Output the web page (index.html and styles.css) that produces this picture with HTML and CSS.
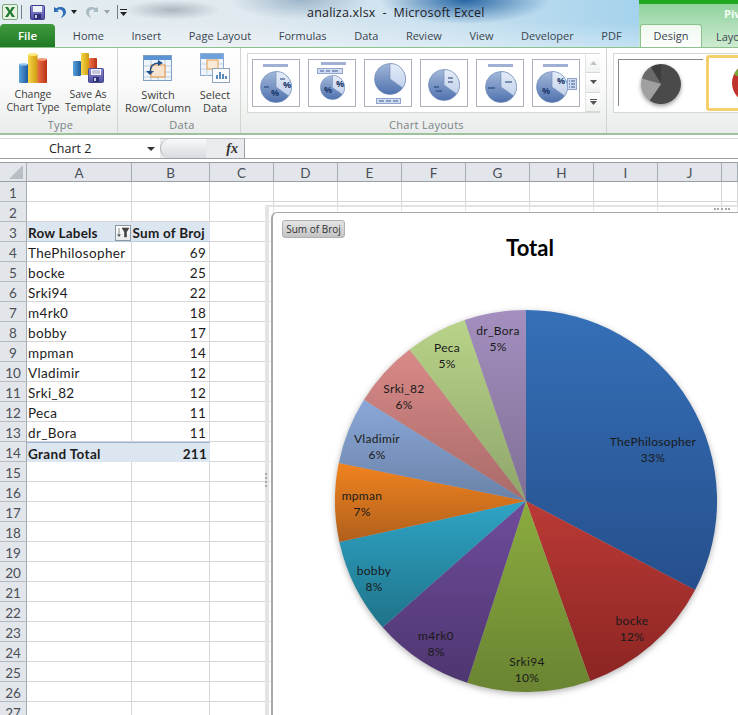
FILE: index.html
```html
<!DOCTYPE html>
<html lang="en">
<head>
<meta charset="utf-8">
<title>analiza.xlsx - Microsoft Excel</title>
<link rel="stylesheet" href="styles.css">
</head>
<body>
<svg class="defs" width="0" height="0">
  <defs>
    <linearGradient id="gBlue" x1="0" y1="0" x2="0" y2="1"><stop offset="0" stop-color="#3570b8"/><stop offset="1" stop-color="#264f8c"/></linearGradient>
    <linearGradient id="gRed" x1="0" y1="0" x2="0" y2="1"><stop offset="0" stop-color="#bb3a36"/><stop offset="1" stop-color="#8b2523"/></linearGradient>
    <linearGradient id="gGreen" x1="0" y1="0" x2="0" y2="1"><stop offset="0" stop-color="#8bac3f"/><stop offset="1" stop-color="#6a8432"/></linearGradient>
    <linearGradient id="gPurple" x1="0" y1="0" x2="0" y2="1"><stop offset="0" stop-color="#6f4c9c"/><stop offset="1" stop-color="#4e3670"/></linearGradient>
    <linearGradient id="gTeal" x1="0" y1="0" x2="0" y2="1"><stop offset="0" stop-color="#2fa4c6"/><stop offset="1" stop-color="#1f7389"/></linearGradient>
    <linearGradient id="gOrange" x1="0" y1="0" x2="0" y2="1"><stop offset="0" stop-color="#f1831f"/><stop offset="1" stop-color="#b0601c"/></linearGradient>
    <linearGradient id="gLBlue" x1="0" y1="0" x2="0" y2="1"><stop offset="0" stop-color="#8aa8d8"/><stop offset="1" stop-color="#6a82a8"/></linearGradient>
    <linearGradient id="gPink" x1="0" y1="0" x2="0" y2="1"><stop offset="0" stop-color="#d98a88"/><stop offset="1" stop-color="#a86a68"/></linearGradient>
    <linearGradient id="gLime" x1="0" y1="0" x2="0" y2="1"><stop offset="0" stop-color="#b9d389"/><stop offset="1" stop-color="#8ea56a"/></linearGradient>
    <linearGradient id="gLilac" x1="0" y1="0" x2="0" y2="1"><stop offset="0" stop-color="#a48fbf"/><stop offset="1" stop-color="#7f6f95"/></linearGradient>
    <linearGradient id="tPie" x1="0" y1="0" x2="0" y2="1"><stop offset="0" stop-color="#a3b8da"/><stop offset="1" stop-color="#4f72ae"/></linearGradient>
    <linearGradient id="tLight" x1="0" y1="0" x2="0" y2="1"><stop offset="0" stop-color="#e4ecf8"/><stop offset="1" stop-color="#c2d2ec"/></linearGradient>
    <linearGradient id="bBlue" x1="0" y1="0" x2="1" y2="0"><stop offset="0" stop-color="#5aa2dc"/><stop offset="1" stop-color="#1d5a9e"/></linearGradient>
    <linearGradient id="bYel" x1="0" y1="0" x2="1" y2="0"><stop offset="0" stop-color="#f6d848"/><stop offset="1" stop-color="#cf9a10"/></linearGradient>
    <linearGradient id="bRed" x1="0" y1="0" x2="1" y2="0"><stop offset="0" stop-color="#ef7448"/><stop offset="1" stop-color="#b93212"/></linearGradient>
    <linearGradient id="fl" x1="0" y1="0" x2="0" y2="1"><stop offset="0" stop-color="#8f8fd8"/><stop offset="1" stop-color="#4e4ea0"/></linearGradient>
    <symbol id="pie" viewBox="0 0 32 32">
      <circle cx="16" cy="16" r="15.5" fill="url(#tPie)" stroke="#6f88b4" stroke-width=".6"/>
      <path d="M16 16V.5A15.5 15.5 0 0 1 28.7 24.9Z" fill="url(#tLight)" stroke="#6f88b4" stroke-width=".6"/>
    </symbol>
  </defs>
</svg>

<header class="top">
  <div class="top-main">
    <div class="qat">
      <svg class="qat-app" width="16" height="16" viewBox="0 0 16 16"><rect x=".5" y=".5" width="15" height="15" rx="1.5" fill="#e8f2e2" stroke="#7da77d"/><path d="M3 3h3l2 3.400L10 3h3l-3.500 5 3.500 5h-3l-2-3.400L6 13H3l3.500-5z" fill="#1f7a33"/></svg>
      <span class="qat-sep"></span>
      <svg class="qat-save" width="15" height="15" viewBox="0 0 15 15"><rect x=".5" y=".5" width="14" height="14" rx="1" fill="url(#fl)" stroke="#3c3c8c"/><rect x="3" y="1" width="9" height="6" fill="#eef0fa"/><rect x="4" y="9" width="7" height="5" fill="#2e2e70"/><rect x="5" y="10" width="2" height="3" fill="#c8c8e8"/></svg>
      <svg class="qat-undo" width="14" height="14" viewBox="0 0 14 14"><path d="M1 2v5h5L4.200 5.200C6.500 3.800 10 4.800 10 8c0 2-1 3.500-2.500 5 3.500-1 5.500-3.400 5.500-6 0-4.500-5.500-6.500-9.800-3.800z" fill="#2f6db8"/></svg>
      <svg class="qat-arrow" width="6" height="4" viewBox="0 0 6 4"><path d="M0 0h6L3 4z" fill="#222"/></svg>
      <svg class="qat-redo" width="14" height="14" viewBox="0 0 14 14"><path d="M13 2v5H8l1.800-1.800C7.500 3.800 4 4.800 4 8c0 2 1 3.500 2.500 5C3 12 1 9.600 1 7c0-4.500 5.500-6.500 9.800-3.800z" fill="#a9bcc4"/></svg>
      <svg class="qat-arrow2" width="6" height="4" viewBox="0 0 6 4"><path d="M0 0h6L3 4z" fill="#9aa5aa"/></svg>
      <span class="qat-sep qat-sep2"></span>
      <svg class="qat-custom" width="7" height="7" viewBox="0 0 7 7"><path d="M0 0h7v1H0zM0 3h7L3.500 7z" fill="#222"/></svg>
      <span class="doc-title">analiza.xlsx  -  Microsoft Excel</span>
    </div>
    <nav class="tabs">
      <span class="tab-file">File</span>
      <span class="tab">Home</span>
      <span class="tab">Insert</span>
      <span class="tab">Page Layout</span>
      <span class="tab">Formulas</span>
      <span class="tab">Data</span>
      <span class="tab">Review</span>
      <span class="tab">View</span>
      <span class="tab">Developer</span>
      <span class="tab">PDF</span>
    </nav>
  </div>
  <div class="top-ctx">
    <div class="ctx-band"></div>
    <div class="ctx-title">PivotChart Tools</div>
    <div class="ctx-tabs">
      <span class="tab-design">Design</span>
      <span class="tab tab-layout">Layout</span>
    </div>
  </div>
</header>

<section class="ribbon">
  <div class="group group-type">
    <div class="group-body">
      <div class="rbtn rbtn-change">
        <svg width="29" height="30" viewBox="0 0 29 30"><rect x="0" y="11" width="9" height="19" rx="1" fill="url(#bBlue)"/><rect x="18" y="6" width="10" height="24" rx="1" fill="url(#bRed)"/><rect x="9" y="1" width="9.500" height="29" rx="1" fill="url(#bYel)"/><ellipse cx="13.700" cy="1.500" rx="4.500" ry="1.500" fill="#fbe97a"/><ellipse cx="23" cy="6.500" rx="4.500" ry="1.400" fill="#f59a72"/><ellipse cx="4.500" cy="11.500" rx="4.200" ry="1.300" fill="#8fc4ec"/></svg>
        <span>Change<br>Chart Type</span>
      </div>
      <div class="rbtn rbtn-save">
        <svg width="31" height="30" viewBox="0 0 31 30"><rect x="0" y="8" width="8" height="15" rx="1" fill="url(#bBlue)"/><rect x="16" y="5" width="8" height="17" rx="1" fill="url(#bRed)"/><rect x="8" y="0" width="8" height="22" rx="1" fill="url(#bYel)"/><rect x="15.500" y="15.500" width="15" height="14" rx="1" fill="url(#fl)" stroke="#4a4a8c"/><rect x="18" y="16" width="10" height="6" fill="#f2f2fa"/><path d="M19 18h8M19 20h8" stroke="#9a9ac8"/><rect x="20" y="24" width="6" height="5" fill="#2e2e70"/><rect x="21" y="25" width="2" height="3" fill="#d0d0e8"/></svg>
        <span>Save As<br>Template</span>
      </div>
    </div>
    <div class="group-label">Type</div>
  </div>
  <div class="group group-data">
    <div class="group-body">
      <div class="rbtn rbtn-switch">
        <svg width="30" height="30" viewBox="0 0 30 30"><rect x=".5" y="2.500" width="28" height="25" fill="#f0f5fb" stroke="#7d9fc8"/><rect x="1" y="3" width="27" height="4" fill="#5b93d2"/><path d="M1 13h27M1 19h27M1 24h27M8 7v20M15 7v20M22 7v20" stroke="#b8cfe6"/><rect x="8" y="12" width="14" height="12" fill="#f5e4cf" stroke="#e88f38"/><path d="M7 20c0-6 3-10 9-10" fill="none" stroke="#20508c" stroke-width="1.500"/><path d="M15 7l5 3-5 3z" fill="#20508c"/><path d="M3 18l4 4 4-4z" fill="#20508c"/></svg>
        <span>Switch<br>Row/Column</span>
      </div>
      <div class="rbtn rbtn-select">
        <svg width="30" height="30" viewBox="0 0 30 30"><rect x=".5" y=".5" width="23" height="22" fill="#f0f5fb" stroke="#8facd0"/><rect x="1" y="1" width="22" height="5" fill="#6fa2da"/><path d="M1 11h22M1 16h22M7 6v17M15 6v17" stroke="#c3d5e8"/><rect x="7" y="7" width="11" height="9" fill="#f9ead8" stroke="#e8a050"/><rect x="12.500" y="15.500" width="17" height="14" fill="#fafcff" stroke="#90a4bc"/><path d="M16 26v-4h2v4zM19 26v-7h2v7zM22 26v-5h2v5zM25 26v-3h2v3z" fill="#5c88b8"/></svg>
        <span>Select<br>Data</span>
      </div>
    </div>
    <div class="group-label">Data</div>
  </div>
  <div class="group group-layouts">
    <div class="group-body">
      <div class="gallery gallery-layouts">
        <div class="thumb"><svg width="46" height="46" viewBox="0 0 46 46"><rect x="10" y="4" width="25" height="3" fill="#9fb0d4"/><use href="#pie" x="7" y="11" width="32" height="32"/><path d="M27 19h5M11 27h5" stroke="#1c3a6e"/><text class="pct" x="30" y="28">%</text><text class="pct" x="18" y="36">%</text></svg></div>
        <div class="thumb"><svg width="46" height="46" viewBox="0 0 46 46"><rect x="12" y="2" width="25" height="3" fill="#9fb0d4"/><rect x="8.500" y="8.500" width="25" height="5" fill="#cfdcf2" stroke="#8fa5cc"/><path d="M11 11h4M17 11h4M23 11h6" stroke="#3f5a90"/><use href="#pie" x="11" y="15" width="25" height="25"/><text class="pct" x="27" y="27">%</text><text class="pct" x="15" y="33">%</text></svg></div>
        <div class="thumb"><svg width="46" height="46" viewBox="0 0 46 46"><use href="#pie" x="9" y="3" width="32" height="32"/><rect x="11.500" y="38.500" width="24" height="5" fill="#cfdcf2" stroke="#8fa5cc"/><path d="M14 41h5M21 41h5M28 41h5" stroke="#3f5a90"/></svg></div>
        <div class="thumb"><svg width="46" height="46" viewBox="0 0 46 46"><use href="#pie" x="7" y="9" width="32" height="32"/><path d="M27 18h5M27 22h5M13 27h5M15 31h6" stroke="#1c3a6e"/></svg></div>
        <div class="thumb"><svg width="46" height="46" viewBox="0 0 46 46"><rect x="11" y="4" width="25" height="3" fill="#9fb0d4"/><use href="#pie" x="8" y="11" width="32" height="32"/><path d="M28 22h7M11 28h7" stroke="#1c3a6e" stroke-width="1.200"/></svg></div>
        <div class="thumb"><svg width="46" height="46" viewBox="0 0 46 46"><rect x="10" y="4" width="25" height="3" fill="#9fb0d4"/><use href="#pie" x="3" y="11" width="32" height="32"/><text class="pct" x="24" y="24">%</text><text class="pct" x="9" y="34">%</text><rect x="34.500" y="18.500" width="9" height="11" fill="#cfdcf2" stroke="#8fa5cc"/><path d="M36 21h1M38 21h4M36 24h1M38 24h4M36 27h1M38 27h4" stroke="#3f5a90"/></svg></div>
        <div class="scroll">
          <span class="sbtn sbtn-up"><svg width="7" height="4" viewBox="0 0 7 4"><path d="M0 4h7L3.500 0z" fill="#bcc4c8"/></svg></span>
          <span class="sbtn"><svg width="7" height="4" viewBox="0 0 7 4"><path d="M0 0h7L3.500 4z" fill="#555"/></svg></span>
          <span class="sbtn"><svg width="7" height="6" viewBox="0 0 7 6"><path d="M0 0h7v1H0zM0 2h7L3.500 6z" fill="#555"/></svg></span>
        </div>
      </div>
    </div>
    <div class="group-label">Chart Layouts</div>
  </div>
  <div class="group group-styles">
    <div class="group-body">
      <div class="gallery gallery-styles">
        <div class="style-thumb">
          <svg class="style-pie" width="48" height="48" viewBox="0 0 48 48"><path d="M24 24V4A20 20 0 1 1 12.500 40.400Z" fill="#4a4a4a"/><path d="M24 24L12.500 40.400A20 20 0 0 1 4.800 18.500Z" fill="#a0a0a0"/><path d="M24 24L4.800 18.500A20 20 0 0 1 13.500 7Z" fill="#6a6a6a"/><path d="M24 24L13.500 7A20 20 0 0 1 24 4Z" fill="#3e3e3e"/></svg>
        </div>
        <div class="style-sel">
          <svg width="36" height="48" viewBox="0 0 36 48"><circle cx="24" cy="24" r="20" fill="#c0322e"/><path d="M24 24L5.900 15.500A20 20 0 0 1 17.200 5.200Z" fill="#7aa93a"/></svg>
        </div>
      </div>
    </div>
  </div>
</section>

<section class="formula">
  <div class="namebox"><span class="name-text">Chart 2</span><svg width="8" height="4" viewBox="0 0 8 4"><path d="M0 0h8L4 4z" fill="#333"/></svg></div>
  <div class="fx-wrap"><span class="fx-pill"></span><span class="fx">fx</span></div>
  <div class="fbar"></div>
</section>

<main class="sheet">
  <div class="row row-head">
    <div class="rh corner"><svg width="14" height="14" viewBox="0 0 14 14"><path d="M14 0v14H0z" fill="#b9bec5"/></svg></div>
    <div class="ch">A</div><div class="ch">B</div><div class="ch">C</div><div class="ch">D</div><div class="ch">E</div><div class="ch">F</div><div class="ch">G</div><div class="ch">H</div><div class="ch">I</div><div class="ch">J</div><div class="ch"></div>
  </div>
  <div class="row"><div class="rh">1</div><div class="c"></div><div class="c"></div><div class="c"></div><div class="c"></div><div class="c"></div><div class="c"></div><div class="c"></div><div class="c"></div><div class="c"></div><div class="c"></div><div class="c"></div></div>
  <div class="row"><div class="rh">2</div><div class="c"></div><div class="c"></div><div class="c"></div><div class="c"></div><div class="c"></div><div class="c"></div><div class="c"></div><div class="c"></div><div class="c"></div><div class="c"></div><div class="c"></div></div>
  <div class="row"><div class="rh">3</div><div class="c p-head p-a">Row Labels<span class="filter"><svg width="14" height="14" viewBox="0 0 14 14"><path d="M6 2h7L10.500 6v5h-2V6zM3 2v8M1.500 8.500L3 10.500 4.500 8.500" fill="#444" stroke="#444" stroke-width=".6"/></svg></span></div><div class="c p-head num">Sum of Broj</div><div class="c"></div></div>
  <div class="row"><div class="rh">4</div><div class="c a">ThePhilosopher</div><div class="c num">69</div><div class="c"></div></div>
  <div class="row"><div class="rh">5</div><div class="c a">bocke</div><div class="c num">25</div><div class="c"></div></div>
  <div class="row"><div class="rh">6</div><div class="c a">Srki94</div><div class="c num">22</div><div class="c"></div></div>
  <div class="row"><div class="rh">7</div><div class="c a">m4rk0</div><div class="c num">18</div><div class="c"></div></div>
  <div class="row"><div class="rh">8</div><div class="c a">bobby</div><div class="c num">17</div><div class="c"></div></div>
  <div class="row"><div class="rh">9</div><div class="c a">mpman</div><div class="c num">14</div><div class="c"></div></div>
  <div class="row"><div class="rh">10</div><div class="c a">Vladimir</div><div class="c num">12</div><div class="c"></div></div>
  <div class="row"><div class="rh">11</div><div class="c a">Srki_82</div><div class="c num">12</div><div class="c"></div></div>
  <div class="row"><div class="rh">12</div><div class="c a">Peca</div><div class="c num">11</div><div class="c"></div></div>
  <div class="row"><div class="rh">13</div><div class="c a">dr_Bora</div><div class="c num">11</div><div class="c"></div></div>
  <div class="row"><div class="rh">14</div><div class="c p-total a">Grand Total</div><div class="c p-total num">211</div><div class="c"></div></div>
  <div class="row"><div class="rh">15</div><div class="c"></div><div class="c"></div><div class="c"></div></div>
  <div class="row"><div class="rh">16</div><div class="c"></div><div class="c"></div><div class="c"></div></div>
  <div class="row"><div class="rh">17</div><div class="c"></div><div class="c"></div><div class="c"></div></div>
  <div class="row"><div class="rh">18</div><div class="c"></div><div class="c"></div><div class="c"></div></div>
  <div class="row"><div class="rh">19</div><div class="c"></div><div class="c"></div><div class="c"></div></div>
  <div class="row"><div class="rh">20</div><div class="c"></div><div class="c"></div><div class="c"></div></div>
  <div class="row"><div class="rh">21</div><div class="c"></div><div class="c"></div><div class="c"></div></div>
  <div class="row"><div class="rh">22</div><div class="c"></div><div class="c"></div><div class="c"></div></div>
  <div class="row"><div class="rh">23</div><div class="c"></div><div class="c"></div><div class="c"></div></div>
  <div class="row"><div class="rh">24</div><div class="c"></div><div class="c"></div><div class="c"></div></div>
  <div class="row"><div class="rh">25</div><div class="c"></div><div class="c"></div><div class="c"></div></div>
  <div class="row"><div class="rh">26</div><div class="c"></div><div class="c"></div><div class="c"></div></div>
  <div class="row"><div class="rh">27</div><div class="c"></div><div class="c"></div><div class="c"></div></div>

  <aside class="chart">
    <div class="chart-body">
      <div class="field-btn">Sum of Broj</div>
      <div class="chart-title">Total</div>
      <svg class="pie" width="418" height="415" viewBox="320 300 418 415">
        <g class="slices">
          <path d="M526 501V310A191 191 0 0 1 695.100 589.900Z" fill="url(#gBlue)"/>
          <path d="M526 501L695.100 589.900A191 191 0 0 1 590.100 680.900Z" fill="url(#gRed)"/>
          <path d="M526 501L590.100 680.900A191 191 0 0 1 467.200 682.700Z" fill="url(#gGreen)"/>
          <path d="M526 501L467.200 682.700A191 191 0 0 1 382.600 627.200Z" fill="url(#gPurple)"/>
          <path d="M526 501L382.600 627.200A191 191 0 0 1 339.400 541.900Z" fill="url(#gTeal)"/>
          <path d="M526 501L339.400 541.900A191 191 0 0 1 338.800 462.900Z" fill="url(#gOrange)"/>
          <path d="M526 501L338.800 462.900A191 191 0 0 1 364 399.800Z" fill="url(#gLBlue)"/>
          <path d="M526 501L364 399.800A191 191 0 0 1 409.600 349.600Z" fill="url(#gPink)"/>
          <path d="M526 501L409.600 349.600A191 191 0 0 1 464.600 320.100Z" fill="url(#gLime)"/>
          <path d="M526 501L464.600 320.100A191 191 0 0 1 526 310Z" fill="url(#gLilac)"/>
        </g>
        <g class="labels">
          <text x="653" y="446">ThePhilosopher</text><text x="653" y="462">33%</text>
          <text x="632" y="625">bocke</text><text x="632" y="641">12%</text>
          <text x="527" y="666">Srki94</text><text x="527" y="682">10%</text>
          <text x="436" y="640">m4rk0</text><text x="436" y="656">8%</text>
          <text x="374" y="575">bobby</text><text x="374" y="591">8%</text>
          <text x="362" y="500">mpman</text><text x="362" y="516">7%</text>
          <text x="377" y="443">Vladimir</text><text x="377" y="459">6%</text>
          <text x="404" y="393">Srki_82</text><text x="404" y="409">6%</text>
          <text x="447" y="352">Peca</text><text x="447" y="368">5%</text>
          <text x="498" y="335">dr_Bora</text><text x="498" y="351">5%</text>
        </g>
      </svg>
    </div>
  </aside>
</main>
</body>
</html>
```
FILE: styles.css
```css
* { box-sizing: border-box; }
html, body { margin: 0; height: 100%; }
body {
  width: 738px;
  height: 715px;
  overflow: hidden;
  background: #fff;
  font-family: "Open Sans", "Liberation Sans", sans-serif;
  font-size: 11px;
  color: #3c3c3c;
}
.defs { position: absolute; }

/* Title bar and tabs */
.top { display: flex; height: 48px; border-bottom: 1px solid #8cc08c; }
.top-main {
  width: 639px;
  display: flex;
  flex-direction: column;
  background:
    linear-gradient(rgba(255,255,255,0) 45%, rgba(255,255,255,.35) 100%),
    radial-gradient(ellipse 48px 10px at 172px 10px, rgba(120,130,140,.5), rgba(120,130,140,0)),
    radial-gradient(ellipse 85px 24px at 465px 0, rgba(30,95,160,.95), rgba(30,95,160,0)),
    radial-gradient(ellipse 70px 20px at 300px 0, rgba(70,110,150,.4), rgba(70,110,150,0)),
    linear-gradient(90deg, #e4edf1 0, #dfe9ef 40%, #c8e0ef 70%, #a4d2ec 100%);
}
.qat { height: 24px; display: flex; align-items: center; flex: none; }
.qat-app { margin-left: 2px; }
.qat-sep { width: 1px; height: 14px; background: #6e7f88; margin-left: 3px; }
.qat-save { margin-left: 8px; }
.qat-undo { margin-left: 8px; }
.qat-arrow { margin-left: 4px; }
.qat-redo { margin-left: 8px; }
.qat-arrow2 { margin-left: 5px; }
.qat-sep2 { margin-left: 7px; }
.qat-custom { margin-left: 2px; }
.doc-title {
  margin-left: 180px;
  font-size: 12.500px;
  letter-spacing: .2px;
  color: #1c2228;
  white-space: pre;
}
.tabs { height: 23px; display: flex; align-items: center; }
.tab-file {
  width: 55px;
  height: 23px;
  line-height: 23px;
  text-align: center;
  color: #fff;
  font-size: 11.500px;
  font-weight: 600;
  border-radius: 4px 4px 0 0;
  background: linear-gradient(#3f9a3f, #1f7a24);
  margin-right: 4px;
}
.tab { padding: 0 13.800px; color: #3c4650; white-space: nowrap; }

.top-ctx {
  width: 99px;
  display: flex;
  flex-direction: column;
  background: linear-gradient(#8bd09a, #cdebd0);
  overflow: hidden;
}
.ctx-band { height: 4px; background: #1fa81f; flex: none; }
.ctx-title {
  height: 20px;
  line-height: 20px;
  padding-left: 85px;
  color: #f4fff4;
  font-weight: 700;
  white-space: nowrap;
}
.ctx-tabs { height: 24px; display: flex; align-items: center; }
.tab-design {
  width: 62px;
  height: 24px;
  line-height: 22px;
  text-align: center;
  background: linear-gradient(#eef8ee, #fff);
  border: 1px solid #8cc08c;
  border-bottom: 0;
  border-radius: 3px 3px 0 0;
  color: #3c4650;
  flex: none;
  margin-left: 1px;
}
.tab-layout { padding-left: 14px; }

/* Ribbon */
.ribbon {
  display: flex;
  height: 87px;
  border-bottom: 2px solid #9cc29c;
  background: linear-gradient(#fff 0, #f8f9f8 50%, #e9ecea 100%);
  overflow: hidden;
}
.group { display: flex; flex-direction: column; flex: none; border-right: 1px solid #cfd6cf; }
.group-type { width: 118px; padding-left: 4px; font-size: 10.500px; }
.group-data { width: 123px; padding-left: 6px; }
.group-layouts { width: 366px; padding-left: 6px; }
.group-styles { flex: 1; min-width: 0; border-right: 0; padding-left: 6px; }
.group-body { height: 70px; display: flex; flex: none; }
.group-label { text-align: center; height: 15px; line-height: 13px; font-size: 11px; color: #7a8288; letter-spacing: .3px; }
.rbtn {
  display: flex;
  flex-direction: column;
  align-items: center;
  text-align: center;
  flex: none;
  padding-top: 5px;
  line-height: 13px;
  color: #3c3c3c;
  white-space: nowrap;
}
.rbtn svg { margin-bottom: 5px; }
.rbtn-change { width: 58px; }
.rbtn-save { width: 52px; }
.rbtn-switch { width: 68px; }
.rbtn-select { width: 46px; }

.gallery {
  height: 60px;
  margin-top: 5px;
  display: flex;
  background: #fff;
  border: 1px solid #d4d9d4;
  flex: none;
}
.gallery-layouts { width: 353px; padding: 5px 0 0 4px; gap: 8px; }
.gallery-styles { width: 140px; padding: 1px 0 0 4px; gap: 3px; }
.thumb { width: 48px; height: 48px; border: 1px solid #a8b0bc; background: #fff; flex: none; }
.pct { font-size: 9px; font-weight: 700; fill: #1c3a6e; font-family: "Open Sans", sans-serif; }
.scroll {
  display: flex;
  flex-direction: column;
  width: 15px;
  margin: -5px 0 0 -3px;
  flex: none;
  border-left: 1px solid #e2e6e2;
}
.sbtn {
  flex: 1;
  display: flex;
  align-items: center;
  justify-content: center;
  border-bottom: 1px solid #d4d9d4;
  background: linear-gradient(#fff, #f0f2f0);
}
.style-thumb {
  width: 85px;
  height: 47px;
  border-top: 1px solid #8a8a8a;
  border-left: 1px solid #8a8a8a;
  margin-top: 4px;
  display: flex;
  justify-content: center;
  flex: none;
}
.style-pie { filter: drop-shadow(0 2px 2px rgba(0,0,0,.4)); }
.style-sel {
  width: 60px;
  height: 56px;
  border: 3px solid #f6d06e;
  border-radius: 3px;
  background: #fff;
  flex: none;
  overflow: hidden;
  padding: 1px 0 0 19px;
}

/* Formula bar */
.formula { display: flex; height: 24px; padding-top: 3px; border-bottom: 1px solid #9a9fa5; }
.namebox {
  width: 160px;
  display: flex;
  align-items: center;
  padding-left: 49px;
  background: #fff;
  border-top: 1px solid #d4d8dc;
  flex: none;
}
.name-text { font-size: 12.500px; color: #222; width: 98px; }
.fx-wrap {
  width: 85px;
  display: flex;
  align-items: center;
  justify-content: flex-end;
  padding-right: 6px;
  background: #e9ebee;
  border-right: 1px solid #9a9fa5;
  border-top: 1px solid #b8bcc0;
  flex: none;
}
.fx-pill {
  width: 50px;
  height: 100%;
  margin-right: 20px;
  border-radius: 10px 0 0 10px;
  background: linear-gradient(#f8f9fa, #d8dbdf);
  border-left: 1px solid #b0b4b8;
}
.fx { font-family: "Liberation Serif", serif; font-style: italic; font-weight: 700; font-size: 14px; color: #333; }
.fbar { flex: 1; background: #fff; border-top: 1px solid #d4d8dc; }

/* Sheet */
.sheet { position: relative; margin-top: 3px; font-family: Lato, "Open Sans", sans-serif; font-size: 13.500px; color: #1c1c1c; }
.row {
  display: grid;
  grid-template-columns: 27px 105px 78px 64px repeat(7, 64px) 1fr;
  height: 20px;
}
.row-head { border-top: 1px solid #9a9fa5; }
.rh, .ch {
  background: #e2e5ea;
  border-right: 1px solid #a6abb2;
  border-bottom: 1px solid #b6bbc2;
  display: flex;
  align-items: center;
  justify-content: center;
  color: #4a5058;
  padding-top: 3px;
}
.ch { padding-top: 1px; }
.row-head .ch, .row-head .rh { border-bottom: 1px solid #9a9fa5; }
.corner { justify-content: flex-end; align-items: flex-end; padding: 0 3px 2px 0; }
.c {
  border-right: 1px solid #d6d6d6;
  border-bottom: 1px solid #d6d6d6;
  display: flex;
  align-items: center;
  padding: 2px 2px 0 1px;
  white-space: nowrap;
  min-width: 0;
}
.a { letter-spacing: .35px; }
.num { justify-content: flex-end; letter-spacing: .25px; padding-right: 3px; }
.p-head {
  background: #dce6f1;
  border-right: 0;
  border-bottom: 1px solid #b8cce4;
  font-weight: 700;
}
.p-head.num { padding-right: 5px; }
.p-a { justify-content: space-between; padding-right: 1px; letter-spacing: .2px; }
.p-total {
  background: #dce6f1;
  border-right: 0;
  font-weight: 700;
  border-top: 1px solid #95b3d7;
  border-bottom: 0;
}
.filter {
  width: 16px;
  height: 16px;
  display: flex;
  align-items: center;
  justify-content: center;
  border: 1px solid #8d97a3;
  background: linear-gradient(#fff, #e6e9ee);
  flex: none;
}

/* Chart */
.chart {
  position: absolute;
  left: 265px;
  top: 43px;
  right: 0;
  bottom: 0;
  padding: 5px 0 0 6px;
  border-left: 4px solid #e4e4e4;
  border-top: 2px solid #e2e2e2;
  background: rgba(255,255,255,.4);
}
.chart::before {
  content: "";
  position: absolute;
  left: -4px;
  top: 266px;
  width: 3px;
  height: 14px;
  border-left: 2px dotted #a8a8a8;
}
.chart::after {
  content: "";
  position: absolute;
  right: 8px;
  top: 1px;
  width: 16px;
  height: 3px;
  border-top: 2px dotted #a8a8a8;
}
.chart-body {
  height: 100%;
  background: #fff;
  border-left: 2px solid #a9a9a9;
  border-top: 1px solid #a9a9a9;
  border-top-left-radius: 6px;
  margin-left: -4px;
  padding: 7px 0 0 9px;
}
.field-btn {
  width: 63px;
  height: 18px;
  line-height: 17px;
  text-align: center;
  font-family: "Open Sans", sans-serif;
  font-size: 10px;
  color: #333;
  border: 1px solid #b0b0b0;
  border-radius: 3px;
  background: linear-gradient(#e4e4e4, #c4c4c4);
}
.chart-title {
  width: 496px;
  height: 28px;
  margin-top: -4px;
  line-height: 28px;
  text-align: center;
  font-family: Lato, "Open Sans", sans-serif;
  font-weight: 700;
  font-size: 22px;
  color: #000;
}
.pie {
  display: block;
  margin: 38px 0 0 38px;
  overflow: visible;
}
.slices { filter: drop-shadow(0 2px 3px rgba(0,0,0,.3)); }
.labels text {
  text-anchor: middle;
  font-family: Lato, "Open Sans", sans-serif;
  font-size: 12px;
  letter-spacing: .3px;
  fill: #1a1a1a;
}
```
